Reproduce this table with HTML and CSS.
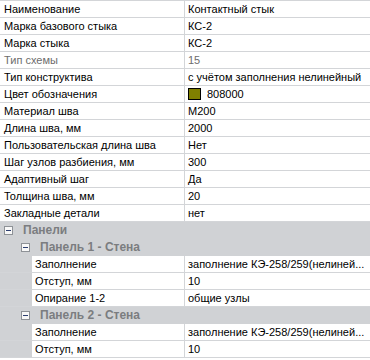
FILE: index.html
```html
<!DOCTYPE html>
<html lang="ru">
<head>
<meta charset="utf-8">
<link rel="stylesheet" href="styles.css">
</head>
<body>
<div class="grid">
  <div class="row"><div class="label">Наименование</div><div class="value">Контактный стык</div></div>
  <div class="row"><div class="label">Марка базового стыка</div><div class="value">КС-2</div></div>
  <div class="row"><div class="label">Марка стыка</div><div class="value">КС-2</div></div>
  <div class="row dim"><div class="label">Тип схемы</div><div class="value">15</div></div>
  <div class="row"><div class="label">Тип конструктива</div><div class="value">с учётом заполнения нелинейный</div></div>
  <div class="row"><div class="label">Цвет обозначения</div><div class="value"><span class="swatch"></span>808000</div></div>
  <div class="row"><div class="label">Материал шва</div><div class="value">М200</div></div>
  <div class="row"><div class="label">Длина шва, мм</div><div class="value">2000</div></div>
  <div class="row"><div class="label">Пользовательская длина шва</div><div class="value">Нет</div></div>
  <div class="row"><div class="label">Шаг узлов разбиения, мм</div><div class="value">300</div></div>
  <div class="row"><div class="label">Адаптивный шаг</div><div class="value">Да</div></div>
  <div class="row"><div class="label">Толщина шва, мм</div><div class="value">20</div></div>
  <div class="row"><div class="label">Закладные детали</div><div class="value">нет</div></div>
  <div class="cat"><span class="toggle"></span>Панели</div>
  <div class="cat sub"><span class="toggle"></span>Панель 1 - Стена</div>
  <div class="row child"><div class="label">Заполнение</div><div class="value">заполнение КЭ-258/259(нелиней...</div></div>
  <div class="row child"><div class="label">Отступ, мм</div><div class="value">10</div></div>
  <div class="row child"><div class="label">Опирание 1-2</div><div class="value">общие узлы</div></div>
  <div class="cat sub"><span class="toggle"></span>Панель 2 - Стена</div>
  <div class="row child"><div class="label">Заполнение</div><div class="value">заполнение КЭ-258/259(нелиней...</div></div>
  <div class="row child"><div class="label">Отступ, мм</div><div class="value">10</div></div>
</div>
</body>
</html>
```

FILE: styles.css
```css
html, body {
  margin: 0;
  padding: 0;
  background: #ffffff;
}
body {
  font-family: "Liberation Sans", Arial, sans-serif;
  font-size: 11px;
  color: #000000;
}
.grid {
  display: flex;
  flex-direction: column;
  border-top: 1px solid #d3d5d8;
  width: 370px;
}
.row {
  display: grid;
  grid-template-columns: 185px 1fr;
  height: 16px;
  border-bottom: 1px solid #d3d5d8;
  line-height: 16px;
  white-space: nowrap;
}
.label {
  padding-left: 4px;
  border-right: 1px solid #d3d5d8;
  overflow: hidden;
  background: #ffffff;
}
.value {
  padding-left: 3px;
  overflow: hidden;
  display: flex;
  align-items: center;
  background: #ffffff;
}
.dim {
  color: #6d6d6d;
}
.swatch {
  width: 11px;
  height: 10px;
  background: #808000;
  border: 1px solid #000000;
  margin-right: 6px;
}
.cat {
  height: 16px;
  line-height: 16px;
  border-bottom: 1px solid #d0d2d5;
  background: #d0d2d5;
  color: #7b7d80;
  font-weight: bold;
  font-size: 12px;
  display: flex;
  align-items: center;
  padding-left: 4px;
  white-space: nowrap;
}
.cat.sub {
  padding-left: 21px;
}
.toggle {
  width: 7px;
  height: 7px;
  border: 1px solid #8e9297;
  background: #f8f8f8;
  margin-right: 10px;
  position: relative;
  flex: none;
}
.toggle::after {
  content: "";
  position: absolute;
  left: 1px;
  top: 3px;
  width: 5px;
  height: 1px;
  background: #2c3e70;
}
.child {
  background: #d0d2d5;
  grid-template-columns: 32px 153px 1fr;
}
.child .label {
  grid-column: 2;
  padding-left: 3px;
}
.child .value {
  grid-column: 3;
}
```
